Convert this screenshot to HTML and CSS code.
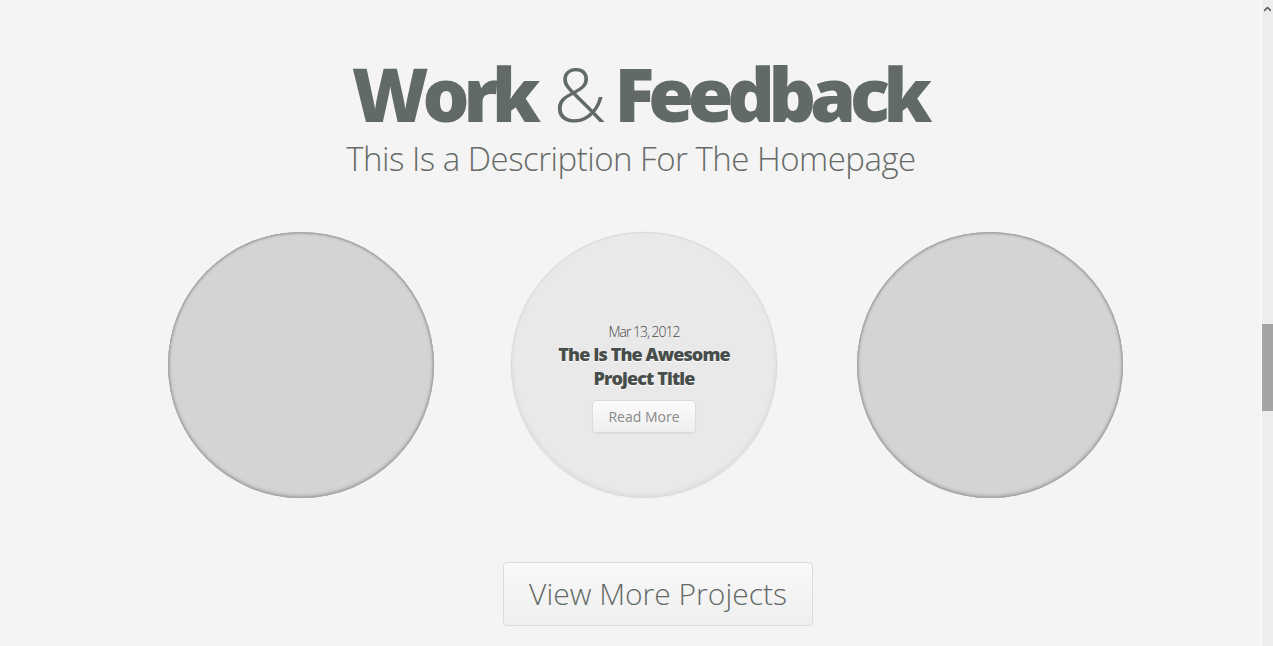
FILE: index.html
```html
<!DOCTYPE html>
<html lang="en">
<head>
<meta charset="utf-8">
<title>Work &amp; Feedback</title>
<link rel="stylesheet" href="styles.css">
</head>
<body>
<main class="page">
  <header class="intro">
    <h1 class="title"><span class="strong">Work</span> <span class="amp">&amp;</span> <span class="strong">Feedback</span></h1>
    <p class="subtitle">This Is a Description For The Homepage</p>
  </header>

  <section class="projects">
    <div class="circle circle-empty"></div>
    <div class="circle circle-active">
      <span class="date">Mar 13, 2012</span>
      <h2 class="project-title">The Is The Awesome<br>Project Title</h2>
      <a class="read-more" href="#">Read More</a>
    </div>
    <div class="circle circle-empty circle-last"></div>
  </section>

  <div class="more">
    <a class="view-more" href="#">View More Projects</a>
  </div>
</main>

<div class="scrollbar" aria-hidden="true">
  <svg class="scroll-arrow" width="7" height="5" viewBox="0 0 7 5"><path d="M0 4 L3.5 0.5 L7 4" fill="none" stroke="#5a5a5a" stroke-width="1.6"/></svg>
  <div class="scroll-thumb"></div>
</div>
</body>
</html>
```

FILE: styles.css
```css
* { box-sizing: border-box; }

html, body {
  margin: 0;
  padding: 0;
  background: #f4f4f4;
  overflow: hidden;
}

body {
  font-family: "Open Sans", "Liberation Sans", sans-serif;
  color: #636a65;
  height: 646px;
}

.page {
  width: 1262px;
  padding-top: 57px;
}

.intro {
  text-align: center;
}

.title {
  margin: 0;
  padding-left: 16px;
  font-size: 74px;
  line-height: 74px;
  font-weight: 800;
  letter-spacing: -6.2px;
  color: #626a65;
}

.title .amp {
  font-weight: 300;
  letter-spacing: 0;
  margin-left: 6px;
  margin-right: -5px;
}

.subtitle {
  margin: 8px 0 0;
  font-size: 33px;
  line-height: 40px;
  font-weight: 300;
  color: #666b68;
  letter-spacing: -0.5px;
}

.projects {
  display: flex;
  gap: 77px;
  padding-left: 168px;
  margin-top: 53px;
}

.circle {
  width: 266px;
  height: 266px;
  border-radius: 50%;
  flex: none;
}

.circle-last {
  margin-left: 3px;
}

.circle-empty {
  background: #d4d4d4;
  box-shadow: inset 0 0 0 1px #a8a8a8, inset 0 -1px 4px rgba(0, 0, 0, 0.35), inset 0 1px 3px rgba(0, 0, 0, 0.2);
}

.circle-active {
  background: #e9e9e9;
  border: 1px solid #dadada;
  box-shadow: 0 0 2px rgba(0, 0, 0, 0.08), inset 0 -2px 4px rgba(0, 0, 0, 0.06);
  display: flex;
  flex-direction: column;
  align-items: center;
  padding-top: 89px;
  text-align: center;
}

.date {
  display: block;
  font-size: 14px;
  line-height: 20px;
  font-weight: 300;
  letter-spacing: -1px;
  color: #4a4a4a;
}

.project-title {
  margin: 0;
  font-size: 18px;
  line-height: 24px;
  font-weight: 800;
  letter-spacing: -0.9px;
  color: #474d49;
  text-shadow: 0 1px 0 #fff;
}

.read-more {
  display: block;
  margin-top: 10px;
  width: 104px;
  height: 33px;
  line-height: 31px;
  font-size: 14px;
  color: #8a8a8a;
  text-decoration: none;
  border: 1px solid #dcdcdc;
  border-radius: 4px;
  background: linear-gradient(#fbfbfb, #efefef);
  box-shadow: 0 1px 1px rgba(0, 0, 0, 0.05);
}

.more {
  display: flex;
  padding-left: 503px;
  margin-top: 64px;
}

.view-more {
  display: block;
  width: 310px;
  height: 64px;
  line-height: 62px;
  text-align: center;
  font-size: 30px;
  font-weight: 300;
  color: #636a65;
  text-decoration: none;
  border: 1px solid #dadada;
  border-radius: 4px;
  background: linear-gradient(#f9f9f9, #efefef);
}

.scrollbar {
  position: fixed;
  top: 0;
  right: 0;
  width: 12px;
  height: 646px;
  background: #ededed;
  border-left: 1px solid #ffffff;
}

.scroll-arrow {
  position: absolute;
  top: 7px;
  left: 2px;
}

.scroll-thumb {
  position: absolute;
  top: 324px;
  left: 0;
  width: 11px;
  height: 87px;
  background: #a4a4a4;
}
```
